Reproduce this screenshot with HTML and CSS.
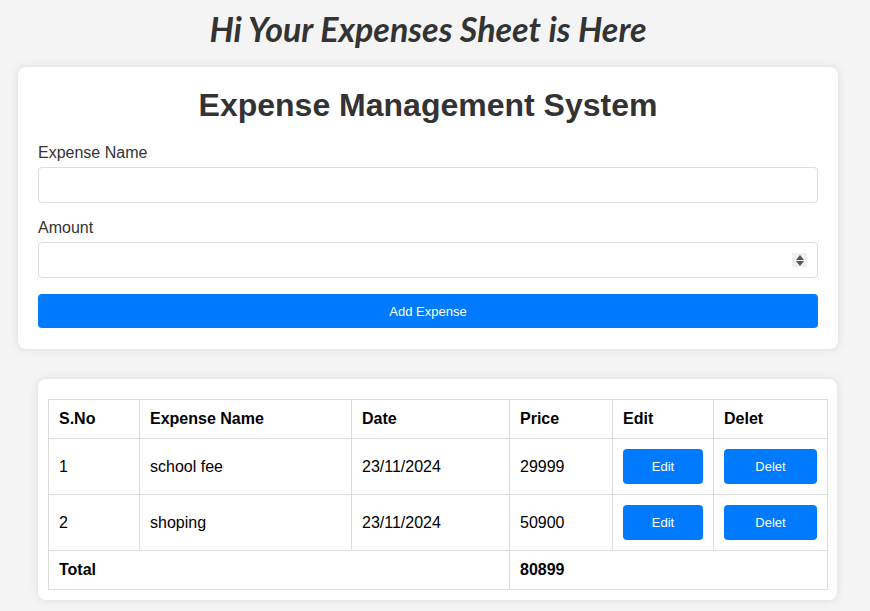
FILE: index.html
```html
<!DOCTYPE html>
<html>
<head>
<meta charset="utf-8">
<link rel="stylesheet" href="styles.css">
</head>
<body>
<div class="page">
  <h2 class="greeting">Hi Your Expenses Sheet is Here</h2>
  <div class="card form-card">
    <h1 class="title">Expense Management System</h1>
    <label class="label">Expense Name</label>
    <input class="field" type="text">
    <label class="label">Amount</label>
    <div class="num-wrap">
      <input class="field" type="number">
      <span class="spinner"><span class="tri up"></span><span class="tri down"></span></span>
    </div>
    <button class="btn btn-add">Add Expense</button>
  </div>
  <div class="card table-card">
    <table class="table">
      <colgroup>
        <col class="c1"><col class="c2"><col class="c3"><col class="c4"><col class="c5"><col class="c6">
      </colgroup>
      <thead>
        <tr><th>S.No</th><th>Expense Name</th><th>Date</th><th>Price</th><th>Edit</th><th>Delet</th></tr>
      </thead>
      <tbody>
        <tr><td>1</td><td>school fee</td><td>23/11/2024</td><td>29999</td><td><button class="btn btn-sm">Edit</button></td><td><button class="btn btn-sm">Delet</button></td></tr>
        <tr><td>2</td><td>shoping</td><td>23/11/2024</td><td>50900</td><td><button class="btn btn-sm">Edit</button></td><td><button class="btn btn-sm">Delet</button></td></tr>
        <tr class="total"><td colspan="3">Total</td><td colspan="3">80899</td></tr>
      </tbody>
    </table>
  </div>
</div>
</body>
</html>
```
FILE: styles.css
```css
html, body {
  margin: 0;
  padding: 0;
  background: #f4f4f4;
  font-family: "Liberation Sans", Arial, sans-serif;
}
.page {
  width: 820px;
  margin-left: 18px;
  padding-bottom: 20px;
}
.greeting {
  margin: 0;
  padding-top: 8px;
  height: 67px;
  box-sizing: border-box;
  text-align: center;
  font-family: Lato, sans-serif;
  font-style: italic;
  font-weight: 700;
  font-size: 34px;
  line-height: 42px;
  color: #333;
}
.card {
  background: #fff;
  border-radius: 8px;
  box-shadow: 0 0 10px rgba(0,0,0,0.1);
  box-sizing: border-box;
}
.form-card {
  padding: 20px;
  height: 282px;
}
.title {
  margin: 0 0 20px;
  text-align: center;
  font-size: 32px;
  line-height: 37px;
  color: #333;
}
.label {
  display: block;
  font-size: 16px;
  line-height: 18px;
  color: #333;
  margin-bottom: 5px;
}
.field {
  display: block;
  width: 100%;
  box-sizing: border-box;
  height: 36px;
  padding: 8px;
  border: 1px solid #ddd;
  border-radius: 4px;
  margin-bottom: 16px;
  font-size: 16px;
  font-family: "Liberation Sans", Arial, sans-serif;
}
.num-wrap {
  position: relative;
}
.spinner {
  position: absolute;
  right: 11px;
  top: 11px;
  width: 15px;
  height: 14px;
  background: #efefef;
  display: flex;
  flex-direction: column;
  align-items: center;
  justify-content: center;
  gap: 1px;
}
.tri {
  width: 0;
  height: 0;
  border-left: 4px solid transparent;
  border-right: 4px solid transparent;
}
.tri.up { border-bottom: 5px solid #555; }
.tri.down { border-top: 5px solid #555; }
.btn {
  background: #007bff;
  color: #fff;
  border: none;
  border-radius: 4px;
  font-family: "Liberation Sans", Arial, sans-serif;
  font-size: 13px;
  cursor: pointer;
}
.btn-add {
  display: block;
  width: 100%;
  height: 34px;
}
.table-card {
  margin-top: 30px;
  margin-left: 20px;
  width: 799px;
  padding: 20px 10px 10px;
}
.table {
  width: 100%;
  border-collapse: collapse;
  table-layout: fixed;
  font-size: 16px;
  color: #000;
}
.c1 { width: 91px; }
.c2 { width: 212px; }
.c3 { width: 158px; }
.c4 { width: 103px; }
.c5 { width: 101px; }
.c6 { width: 114px; }
.table th, .table td {
  border: 1px solid #ddd;
  padding: 10px;
  text-align: left;
  line-height: 18px;
}
.table th { font-weight: 700; }
.total td { font-weight: 700; }
.btn-sm {
  display: block;
  width: 100%;
  height: 35px;
}
```
